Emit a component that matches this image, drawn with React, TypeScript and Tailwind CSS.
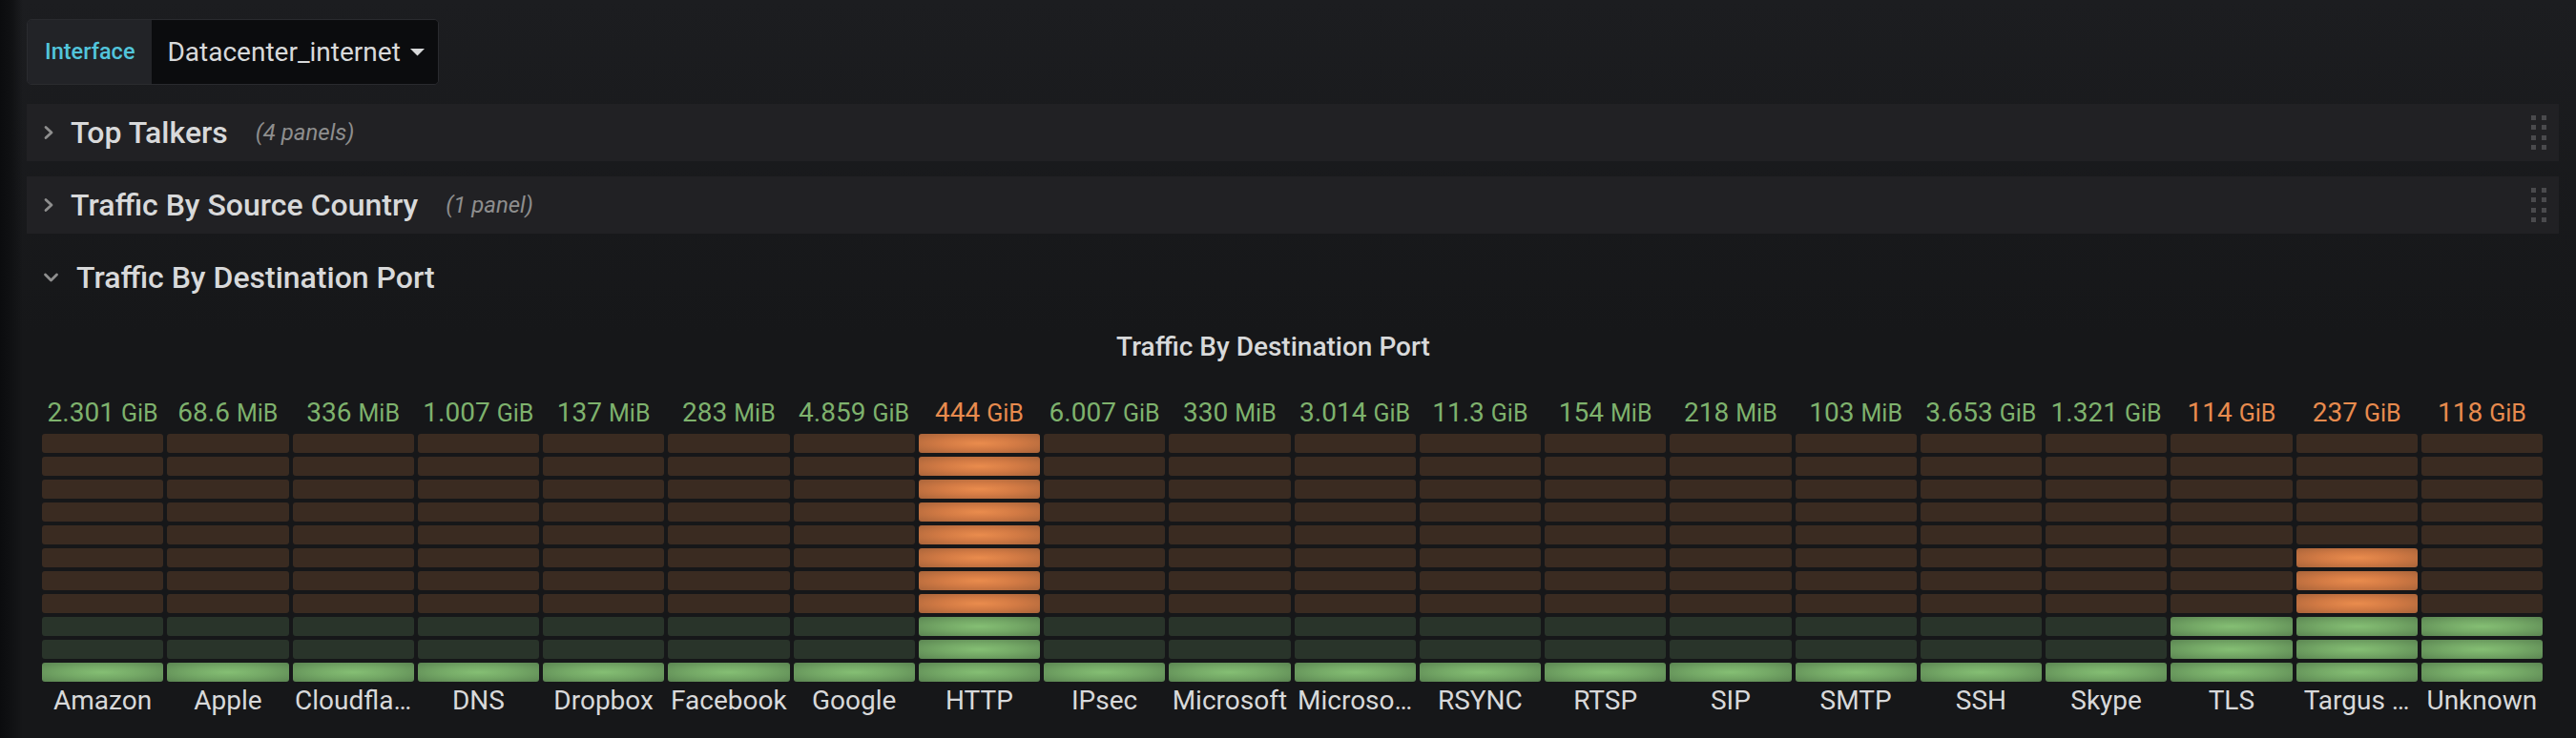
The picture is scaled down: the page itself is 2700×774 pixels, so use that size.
import React from "react";

type Port = { name: string; value: string; unit: string; warn: boolean; green: number; orange: number };

const ports: Port[] = [
  { name: "Amazon", value: "2.301", unit: "GiB", warn: false, green: 1, orange: 0 },
  { name: "Apple", value: "68.6", unit: "MiB", warn: false, green: 1, orange: 0 },
  { name: "Cloudfla…", value: "336", unit: "MiB", warn: false, green: 1, orange: 0 },
  { name: "DNS", value: "1.007", unit: "GiB", warn: false, green: 1, orange: 0 },
  { name: "Dropbox", value: "137", unit: "MiB", warn: false, green: 1, orange: 0 },
  { name: "Facebook", value: "283", unit: "MiB", warn: false, green: 1, orange: 0 },
  { name: "Google", value: "4.859", unit: "GiB", warn: false, green: 1, orange: 0 },
  { name: "HTTP", value: "444", unit: "GiB", warn: true, green: 3, orange: 8 },
  { name: "IPsec", value: "6.007", unit: "GiB", warn: false, green: 1, orange: 0 },
  { name: "Microsoft", value: "330", unit: "MiB", warn: false, green: 1, orange: 0 },
  { name: "Microso…", value: "3.014", unit: "GiB", warn: false, green: 1, orange: 0 },
  { name: "RSYNC", value: "11.3", unit: "GiB", warn: false, green: 1, orange: 0 },
  { name: "RTSP", value: "154", unit: "MiB", warn: false, green: 1, orange: 0 },
  { name: "SIP", value: "218", unit: "MiB", warn: false, green: 1, orange: 0 },
  { name: "SMTP", value: "103", unit: "MiB", warn: false, green: 1, orange: 0 },
  { name: "SSH", value: "3.653", unit: "GiB", warn: false, green: 1, orange: 0 },
  { name: "Skype", value: "1.321", unit: "GiB", warn: false, green: 1, orange: 0 },
  { name: "TLS", value: "114", unit: "GiB", warn: true, green: 3, orange: 0 },
  { name: "Targus …", value: "237", unit: "GiB", warn: true, green: 3, orange: 3 },
  { name: "Unknown", value: "118", unit: "GiB", warn: true, green: 3, orange: 0 },
];

// 11 cells per column: top 8 orange zone, bottom 3 green zone
function Cell({ zone, lit }: { zone: "orange" | "green"; lit: boolean }) {
  let cls = "";
  if (zone === "orange") {
    cls = lit
      ? "bg-[radial-gradient(ellipse_at_center,#ea8c4d_0%,#d27a44_45%,#a9643a_100%)]"
      : "bg-[#3a2b21]";
  } else {
    cls = lit
      ? "bg-[radial-gradient(ellipse_at_center,#85bf74_0%,#74a866_45%,#5b8552_100%)]"
      : "bg-[#29342a]";
  }
  return <div className={`h-[20px] rounded-[3px] ${cls}`}></div>;
}

function Column({ p }: { p: Port }) {
  const cells = [];
  for (let i = 0; i < 11; i++) {
    const fromBottom = 10 - i;
    if (i < 8) {
      cells.push(<Cell key={i} zone="orange" lit={7 - i < p.orange} />);
    } else {
      cells.push(<Cell key={i} zone="green" lit={fromBottom < p.green} />);
    }
  }
  return (
    <div className="flex flex-col min-w-0">
      <div className={`h-[32px] leading-[32px] text-center whitespace-nowrap text-[28px] ${p.warn ? "text-[#e88b4e]" : "text-[#7eb26d]"}`}>
        {p.value}
        <span className="text-[25px] ml-[7px]">{p.unit}</span>
      </div>
      <div className="mt-[6px] flex flex-col gap-[4px]">{cells}</div>
      <div className="mt-[4px] h-[32px] leading-[32px] text-center whitespace-nowrap text-[28px] text-[#d8d9da]">
        {p.name}
      </div>
    </div>
  );
}

function ChevronRight() {
  return (
    <svg width="12" height="16" viewBox="0 0 12 16" fill="none">
      <polyline points="3,2.5 9,8 3,13.5" stroke="#8e8e8e" strokeWidth="2.8" strokeLinecap="round" strokeLinejoin="round" />
    </svg>
  );
}

function ChevronDown() {
  return (
    <svg width="17" height="12" viewBox="0 0 17 12" fill="none">
      <polyline points="2.5,3 8.5,9 14.5,3" stroke="#8e8e8e" strokeWidth="2.8" strokeLinecap="round" strokeLinejoin="round" />
    </svg>
  );
}

function DragHandle() {
  return (
    <div className="grid grid-cols-2 gap-x-[6px] gap-y-[5.5px]">
      {[0, 1, 2, 3, 4, 5, 6, 7].map((i) => (
        <div key={i} className="w-[5px] h-[5px] bg-[#4a4a4d]"></div>
      ))}
    </div>
  );
}

function CollapsedRow({ title, count }: { title: string; count: string }) {
  return (
    <div className="h-[60px] bg-[#212124] flex items-center pl-[17px] pr-[13px]">
      <ChevronRight />
      <span className="ml-[17px] text-[32px] font-medium text-[#d8d9da] leading-[60px]">{title}</span>
      <span className="ml-[29px] text-[24px] italic text-[#8e8e8e]">{count}</span>
      <div className="ml-auto">
        <DragHandle />
      </div>
    </div>
  );
}

export default function App() {
  return (
    <div className="w-[2700px] h-[774px] overflow-hidden flex bg-gradient-to-b from-[#1c1d20] to-[#161719] to-[45%] font-['Roboto',sans-serif]">
      {/* sidebar shadow */}
      <div className="w-[24px] shrink-0 bg-gradient-to-r from-[#0b0c0e] via-[#101113] to-transparent"></div>

      <div className="flex-1 pl-[4px] pr-[18px] pt-[20px]">
        {/* Template variable */}
        <div className="inline-flex h-[69px] rounded-[5px] border border-[#2a2b2f] overflow-hidden">
          <div className="bg-[#222327] flex items-center px-[18px] text-[23.5px] font-medium text-[#52c5db]">
            Interface
          </div>
          <div className="bg-[#0b0c0e] flex items-center pl-[16px] pr-[14px] text-[28px] text-[#d8d9da]">
            Datacenter_internet
            <svg className="ml-[10px]" width="15" height="8" viewBox="0 0 15 8">
              <polygon points="0,0 15,0 7.5,7.5" fill="#d8d9da" />
            </svg>
          </div>
        </div>

        <div className="mt-[20px] flex flex-col gap-[16px]">
          <CollapsedRow title="Top Talkers" count="(4 panels)" />
          <CollapsedRow title="Traffic By Source Country" count="(1 panel)" />
          <div className="h-[60px] flex items-center pl-[17px]">
            <ChevronDown />
            <span className="ml-[18px] text-[32px] font-medium text-[#d8d9da] leading-[60px]">
              Traffic By Destination Port
            </span>
          </div>
        </div>

        {/* Bar gauge panel */}
        <div className="mt-[27px] pl-[16px] pr-[17px]">
          <div className="h-[32px] leading-[32px] text-center pr-[40px] text-[28px] font-medium text-[#d8d9da]">
            Traffic By Destination Port
          </div>
          <div className="mt-[37px] grid grid-cols-20 gap-x-[4px]">
            {ports.map((p) => (
              <Column key={p.name} p={p} />
            ))}
          </div>
        </div>
      </div>
    </div>
  );
}
